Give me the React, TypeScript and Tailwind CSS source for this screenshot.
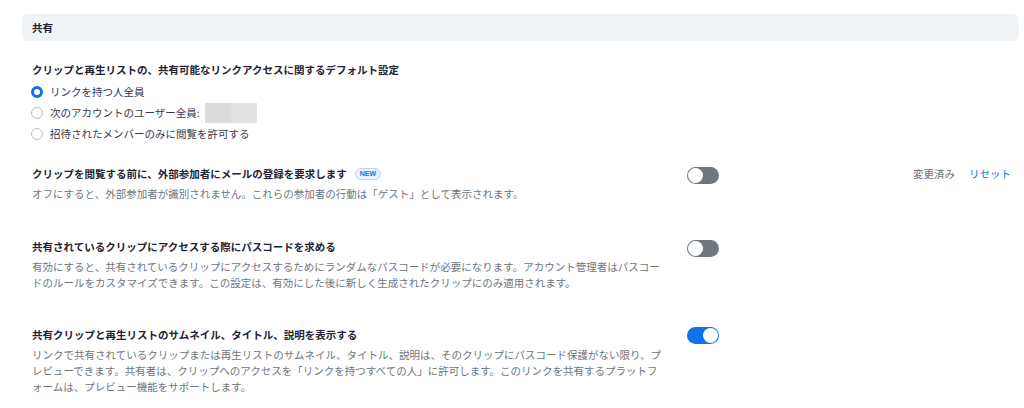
import { useState } from 'react'

const font = { fontFamily: '"Noto Sans CJK JP", "Noto Sans", sans-serif' }

function Toggle({ on, onChange }: { on: boolean; onChange: () => void }) {
  return (
    <button
      onClick={onChange}
      className={`mt-px w-[32px] h-[17px] rounded-full p-[1px] flex shrink-0 ${on ? 'bg-[#0e72ed] justify-end' : 'bg-[#6e7680] justify-start'}`}
      aria-label="toggle"
    >
      <span className="w-[15px] h-[15px] rounded-full bg-white block" />
    </button>
  )
}

function Radio({ checked, label, onSelect, children }: { checked: boolean; label: string; onSelect: () => void; children?: React.ReactNode }) {
  return (
    <label className="h-[21px] flex items-center cursor-pointer" onClick={onSelect}>
      <span
        className={`w-[12px] h-[12px] rounded-full shrink-0 ml-[-1px] ${checked ? 'border-[3px] border-[#0e72ed]' : 'border border-[#b8bcc2]'}`}
      />
      <span className="ml-[7px] text-[#39394d]">{label}</span>
      {children}
    </label>
  )
}

export default function App() {
  const [access, setAccess] = useState(0)
  const [register, setRegister] = useState(false)
  const [passcode, setPasscode] = useState(false)
  const [preview, setPreview] = useState(true)

  return (
    <div style={font} className="bg-white w-[1024px] h-[408px] pt-[14px] pl-[22px] pr-[5px] text-[10.5px] leading-[16px] text-[#232333]">
      <div className="h-[27px] bg-[#f1f4f7] rounded-[6px] px-[10px] flex items-center font-bold">共有</div>

      <div className="px-[10px]">
        <div className="mt-[21px] font-bold">クリップと再生リストの、共有可能なリンクアクセスに関するデフォルト設定</div>
        <div className="mt-[3px] flex flex-col">
          <Radio checked={access === 0} label="リンクを持つ人全員" onSelect={() => setAccess(0)} />
          <Radio checked={access === 1} label="次のアカウントのユーザー全員:" onSelect={() => setAccess(1)}>
            <span className="ml-[5px] flex h-[20px]">
              <span className="w-[26px] bg-[#dcdcdc]" />
              <span className="w-[26px] bg-[#e2e2e2]" />
            </span>
          </Radio>
          <Radio checked={access === 2} label="招待されたメンバーのみに閲覧を許可する" onSelect={() => setAccess(2)} />
        </div>

        <div className="mt-[22px] flex">
          <div className="w-[630px] shrink-0">
            <div className="flex items-center font-bold">
              クリップを閲覧する前に、外部参加者にメールの登録を要求します
              <span className="ml-[8px] h-[12px] px-[4px] rounded-full border border-[#b5d4fa] bg-[#eaf3fe] text-[#0e72ed] text-[7px] leading-[10px] font-bold" style={{ fontFamily: '"Liberation Sans", sans-serif' }}>NEW</span>
            </div>
            <div className="mt-[4px] text-[#6e7680]">オフにすると、外部参加者が識別されません。これらの参加者の行動は「ゲスト」として表示されます。</div>
          </div>
          <div className="ml-[25px]">
            <Toggle on={register} onChange={() => setRegister(!register)} />
          </div>
          <div className="ml-auto -mr-[2px] flex items-start gap-[14px]">
            <span className="text-[#6e7680]">変更済み</span>
            <button className="text-[#0e72ed] leading-[16px]">リセット</button>
          </div>
        </div>

        <div className="mt-[37px] flex">
          <div className="w-[630px] shrink-0">
            <div className="font-bold">共有されているクリップにアクセスする際にパスコードを求める</div>
            <div className="mt-[4px] text-[#6e7680]">有効にすると、共有されているクリップにアクセスするためにランダムなパスコードが必要になります。アカウント管理者はパスコー<br />ドのルールをカスタマイズできます。この設定は、有効にした後に新しく生成されたクリップにのみ適用されます。</div>
          </div>
          <div className="ml-[25px]">
            <Toggle on={passcode} onChange={() => setPasscode(!passcode)} />
          </div>
        </div>

        <div className="mt-[36px] flex">
          <div className="w-[630px] shrink-0">
            <div className="font-bold">共有クリップと再生リストのサムネイル、タイトル、説明を表示する</div>
            <div className="mt-[4px] text-[#6e7680]">リンクで共有されているクリップまたは再生リストのサムネイル、タイトル、説明は、そのクリップにパスコード保護がない限り、プレビューできます。共有者は、クリップへのアクセスを「リンクを持つすべての人」に許可します。このリンクを共有するプラットフォームは、プレビュー機能をサポートします。</div>
          </div>
          <div className="ml-[25px] -mt-px">
            <Toggle on={preview} onChange={() => setPreview(!preview)} />
          </div>
        </div>
      </div>
    </div>
  )
}
